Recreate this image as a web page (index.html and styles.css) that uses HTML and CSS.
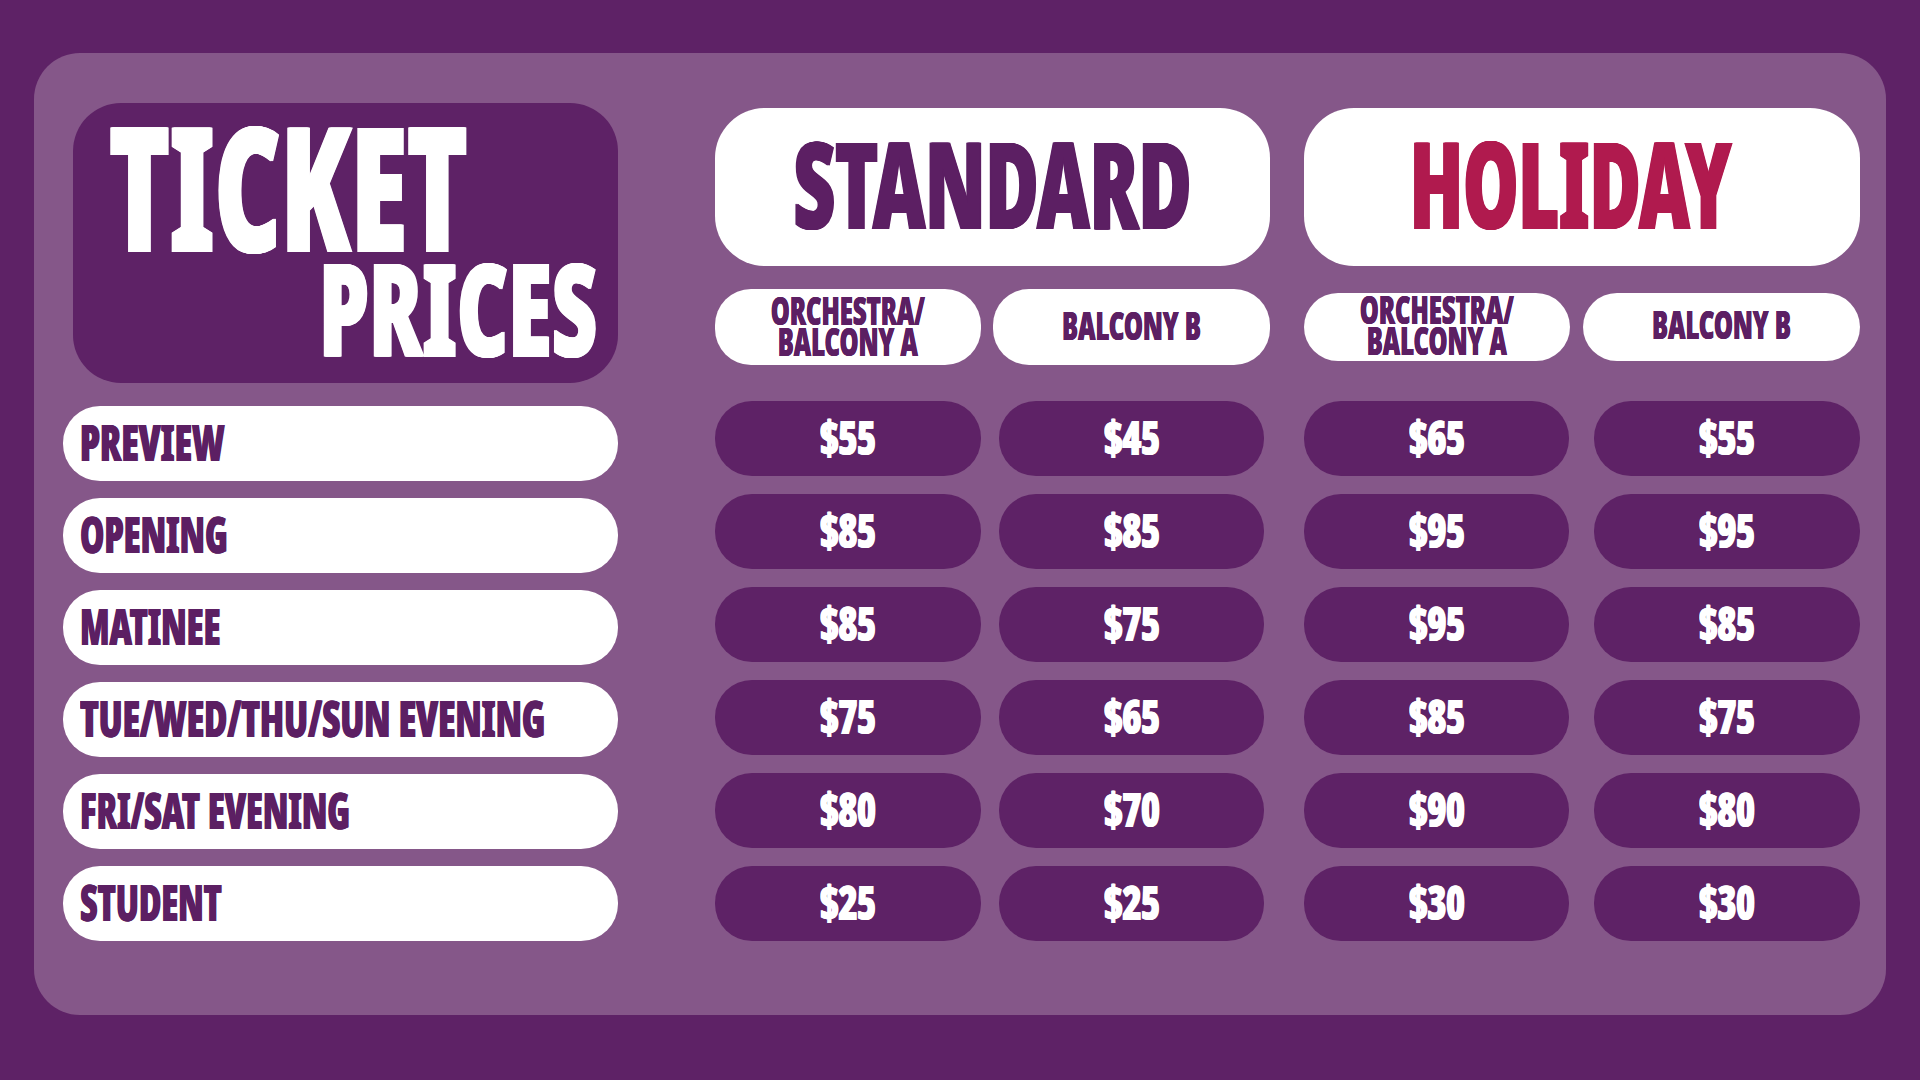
FILE: index.html
```html
<!DOCTYPE html>
<html lang="en">
<head>
<meta charset="utf-8">
<title>Ticket Prices</title>
<link rel="stylesheet" href="styles.css">
</head>
<body>
<main class="panel">
  <section class="left">
    <div class="title-box">
      <span class="t-ticket">TICKET</span>
      <span class="t-prices">PRICES</span>
    </div>
    <ul class="labels">
      <li class="label"><span class="l-wide">PREVIEW</span></li>
      <li class="label"><span>OPENING</span></li>
      <li class="label"><span>MATINEE</span></li>
      <li class="label"><span class="l-wide">TUE/WED/THU/SUN EVENING</span></li>
      <li class="label"><span>FRI/SAT EVENING</span></li>
      <li class="label"><span>STUDENT</span></li>
    </ul>
  </section>
  <section class="right">
    <div class="heads">
      <div class="group">
        <div class="head"><span class="std">STANDARD</span></div>
        <div class="subs">
          <div class="sub sub-a"><span>ORCHESTRA/<br>BALCONY A</span></div>
          <div class="sub sub-b"><span>BALCONY B</span></div>
        </div>
      </div>
      <div class="group group-hol">
        <div class="head head-hol"><span class="hol">HOLIDAY</span></div>
        <div class="subs">
          <div class="sub sub-a"><span>ORCHESTRA/<br>BALCONY A</span></div>
          <div class="sub sub-b"><span>BALCONY B</span></div>
        </div>
      </div>
    </div>
    <div class="prices">
      <div class="pgroup pg-std">
        <div class="price"><span>$55</span></div><div class="price"><span>$45</span></div>
        <div class="price"><span>$85</span></div><div class="price"><span>$85</span></div>
        <div class="price"><span>$85</span></div><div class="price"><span>$75</span></div>
        <div class="price"><span>$75</span></div><div class="price"><span>$65</span></div>
        <div class="price"><span>$80</span></div><div class="price"><span>$70</span></div>
        <div class="price"><span>$25</span></div><div class="price"><span>$25</span></div>
      </div>
      <div class="pgroup pg-hol">
        <div class="price"><span>$65</span></div><div class="price"><span>$55</span></div>
        <div class="price"><span>$95</span></div><div class="price"><span>$95</span></div>
        <div class="price"><span>$95</span></div><div class="price"><span>$85</span></div>
        <div class="price"><span>$85</span></div><div class="price"><span>$75</span></div>
        <div class="price"><span>$90</span></div><div class="price"><span>$80</span></div>
        <div class="price"><span>$30</span></div><div class="price"><span>$30</span></div>
      </div>
    </div>
  </section>
</main>
</body>
</html>
```
FILE: styles.css
```css
* { box-sizing: border-box; }
html, body { margin: 0; padding: 0; }
body {
  width: 1920px;
  height: 1080px;
  background: #5e2266;
  padding: 53px 34px;
  font-family: "Noto Sans", "DejaVu Sans", sans-serif;
  font-weight: 900;
  color: #5c1f63;
  overflow: hidden;
}
span { display: inline-block; white-space: nowrap; }

/* slight horizontal-only thickening of the condensed glyph stems */
.t-ticket {
  text-shadow: -2px 0, -1px 0, 1px 0, 2px 0, 3px 0;
}
.t-prices, .std, .hol {
  text-shadow: -2px 0, -1px 0, 1px 0, 2px 0;
}
.label span, .price span {
  text-shadow: -1px 0, 1px 0;
}
.sub span {
  text-shadow: -0.5px 0, 0.5px 0;
}

.panel {
  height: 962px;
  background: #855789;
  border-radius: 46px;
  padding: 50px 26px 0 29px;
  display: flex;
  gap: 97px;
}
.left { width: 555px; display: flex; flex-direction: column; }
.title-box {
  margin-left: 10px;
  width: 545px;
  height: 280px;
  background: #5e2266;
  border-radius: 48px;
  color: #fff;
  display: flex;
  flex-direction: column;
  align-items: flex-start;
  padding: 0 21px 0 36px;
}
.t-ticket {
  font-size: 174px;
  line-height: 1;
  height: 144px;
  margin-top: -5px;
  transform: scaleX(0.587);
  transform-origin: left center;
}
.t-prices {
  font-size: 130px;
  line-height: 1;
  align-self: flex-end;
  transform: scaleX(0.607);
  transform-origin: right center;
}
.labels {
  list-style: none;
  margin: 23px 0 0;
  padding: 0;
  display: flex;
  flex-direction: column;
  gap: 17px;
}
.label {
  height: 75px;
  background: #fff;
  border-radius: 37px;
  display: flex;
  align-items: center;
  padding: 0 0 3px 17px;
  font-size: 50px;
  line-height: 1;
}
.label span { transform: scaleX(0.612); transform-origin: left center; }
.label .l-wide { transform: scaleX(0.632); }
.right { flex: 1; display: flex; flex-direction: column; }
.heads { display: flex; gap: 34px; margin-top: 5px; align-items: flex-start; }
.group { width: 555px; display: flex; flex-direction: column; }
.group-hol { width: 556px; }
.head {
  height: 158px;
  background: #fff;
  border-radius: 50px;
  display: flex;
  align-items: center;
  justify-content: center;
  padding-bottom: 8px;
  font-size: 120px;
  line-height: 1;
}
.std { transform: scaleX(0.602); }
.hol { color: #b01a4e; transform: scaleX(0.579); }
.head-hol { padding-right: 22px; }
.subs { display: flex; gap: 12px; margin-top: 23px; }
.group-hol .subs { gap: 13px; margin-top: 27px; }
.sub {
  height: 76px;
  background: #fff;
  border-radius: 36px;
  display: flex;
  align-items: center;
  justify-content: center;
  text-align: center;
  padding-bottom: 5px;
  font-size: 39px;
  line-height: 31px;
}
.sub span { transform: scaleX(0.612); }
.group-hol .sub { height: 68px; border-radius: 34px; padding-bottom: 7px; }
.sub-a { width: 266px; }
.sub-b { flex: 1; }
.prices { display: flex; gap: 40px; margin-top: 36px; }
.pgroup {
  display: grid;
  grid-template-columns: 266px 265px;
  column-gap: 18px;
  row-gap: 18px;
}
.pg-hol { grid-template-columns: 265px 266px; column-gap: 25px; }
.price {
  height: 75px;
  background: #5e2266;
  border-radius: 37px;
  color: #fff;
  display: flex;
  align-items: center;
  justify-content: center;
  padding-bottom: 3px;
  font-size: 48px;
  line-height: 1;
}
.price span { transform: scaleX(0.664); }
```
